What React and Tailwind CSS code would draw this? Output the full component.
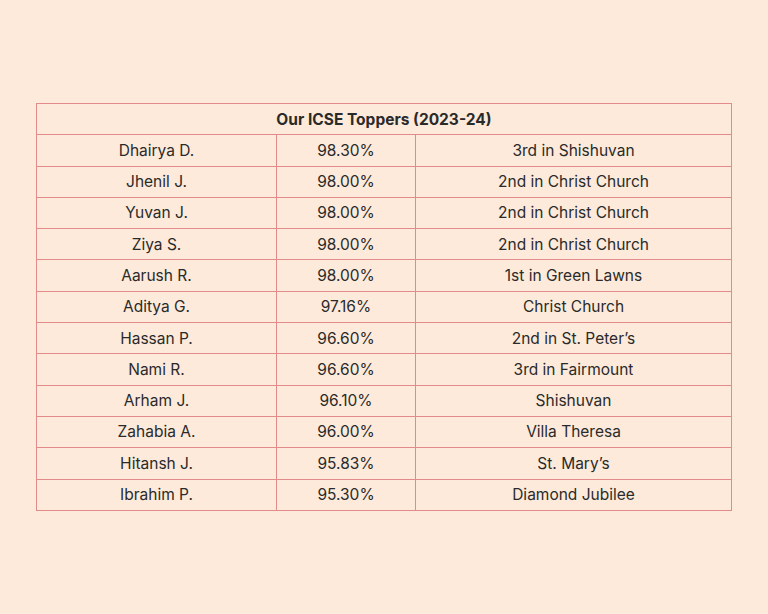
const rows = [
  ['Dhairya D.', '98.30%', '3rd in Shishuvan'],
  ['Jhenil J.', '98.00%', '2nd in Christ Church'],
  ['Yuvan J.', '98.00%', '2nd in Christ Church'],
  ['Ziya S.', '98.00%', '2nd in Christ Church'],
  ['Aarush R.', '98.00%', '1st in Green Lawns'],
  ['Aditya G.', '97.16%', 'Christ Church'],
  ['Hassan P.', '96.60%', '2nd in St. Peter’s'],
  ['Nami R.', '96.60%', '3rd in Fairmount'],
  ['Arham J.', '96.10%', 'Shishuvan'],
  ['Zahabia A.', '96.00%', 'Villa Theresa'],
  ['Hitansh J.', '95.83%', 'St. Mary’s'],
  ['Ibrahim P.', '95.30%', 'Diamond Jubilee'],
]

export default function App() {
  return (
    <div className="w-[768px] h-[614px] bg-[#fdeadb] pt-[103px] pl-[36px] font-['Inter',sans-serif] text-[#2a2a2a]">
      <table className="w-[696px] border-collapse text-[15.5px] text-center">
        <thead>
          <tr className="h-[31.3px]">
            <th colSpan={3} className="border border-[#e38b8b] font-bold p-0">
              Our ICSE Toppers (2023-24)
            </th>
          </tr>
        </thead>
        <tbody>
          {rows.map((r) => (
            <tr key={r[0]} className="h-[31.3px]">
              <td className="border border-[#e38b8b] w-[240px] p-0">{r[0]}</td>
              <td className="border border-[#e38b8b] w-[139px] p-0">{r[1]}</td>
              <td className="border border-[#e38b8b] p-0">{r[2]}</td>
            </tr>
          ))}
        </tbody>
      </table>
    </div>
  )
}
